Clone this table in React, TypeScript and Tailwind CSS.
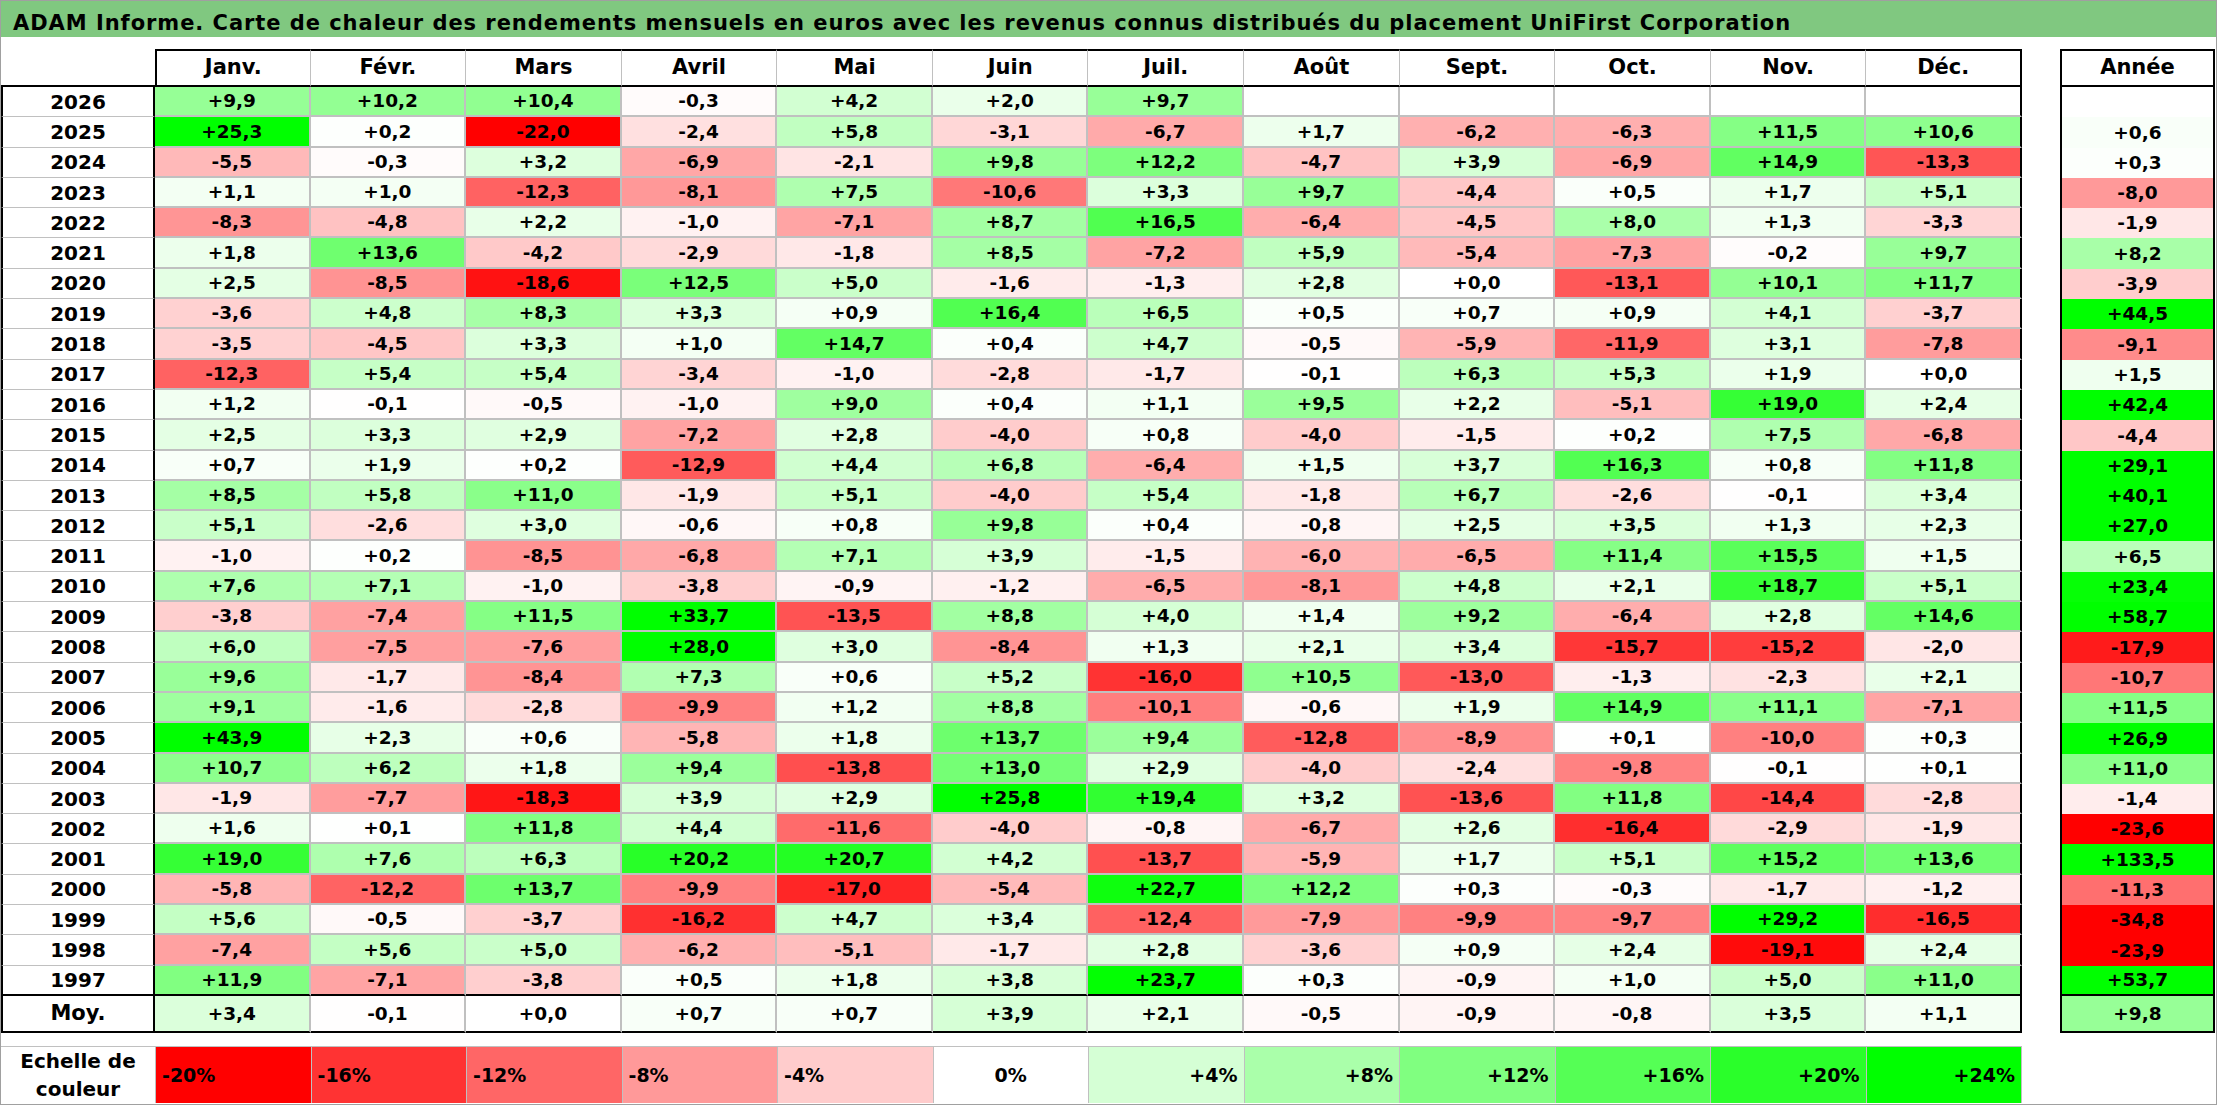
// App.tsx
const months = ["Janv.", "Févr.", "Mars", "Avril", "Mai", "Juin", "Juil.", "Août", "Sept.", "Oct.", "Nov.", "Déc."];

// year, 12 monthly values, annual value
const data: [string, string[], string][] = [
  ["2026", ["+9,9", "+10,2", "+10,4", "-0,3", "+4,2", "+2,0", "+9,7", "", "", "", "", ""], ""],
  ["2025", ["+25,3", "+0,2", "-22,0", "-2,4", "+5,8", "-3,1", "-6,7", "+1,7", "-6,2", "-6,3", "+11,5", "+10,6"], "+0,6"],
  ["2024", ["-5,5", "-0,3", "+3,2", "-6,9", "-2,1", "+9,8", "+12,2", "-4,7", "+3,9", "-6,9", "+14,9", "-13,3"], "+0,3"],
  ["2023", ["+1,1", "+1,0", "-12,3", "-8,1", "+7,5", "-10,6", "+3,3", "+9,7", "-4,4", "+0,5", "+1,7", "+5,1"], "-8,0"],
  ["2022", ["-8,3", "-4,8", "+2,2", "-1,0", "-7,1", "+8,7", "+16,5", "-6,4", "-4,5", "+8,0", "+1,3", "-3,3"], "-1,9"],
  ["2021", ["+1,8", "+13,6", "-4,2", "-2,9", "-1,8", "+8,5", "-7,2", "+5,9", "-5,4", "-7,3", "-0,2", "+9,7"], "+8,2"],
  ["2020", ["+2,5", "-8,5", "-18,6", "+12,5", "+5,0", "-1,6", "-1,3", "+2,8", "+0,0", "-13,1", "+10,1", "+11,7"], "-3,9"],
  ["2019", ["-3,6", "+4,8", "+8,3", "+3,3", "+0,9", "+16,4", "+6,5", "+0,5", "+0,7", "+0,9", "+4,1", "-3,7"], "+44,5"],
  ["2018", ["-3,5", "-4,5", "+3,3", "+1,0", "+14,7", "+0,4", "+4,7", "-0,5", "-5,9", "-11,9", "+3,1", "-7,8"], "-9,1"],
  ["2017", ["-12,3", "+5,4", "+5,4", "-3,4", "-1,0", "-2,8", "-1,7", "-0,1", "+6,3", "+5,3", "+1,9", "+0,0"], "+1,5"],
  ["2016", ["+1,2", "-0,1", "-0,5", "-1,0", "+9,0", "+0,4", "+1,1", "+9,5", "+2,2", "-5,1", "+19,0", "+2,4"], "+42,4"],
  ["2015", ["+2,5", "+3,3", "+2,9", "-7,2", "+2,8", "-4,0", "+0,8", "-4,0", "-1,5", "+0,2", "+7,5", "-6,8"], "-4,4"],
  ["2014", ["+0,7", "+1,9", "+0,2", "-12,9", "+4,4", "+6,8", "-6,4", "+1,5", "+3,7", "+16,3", "+0,8", "+11,8"], "+29,1"],
  ["2013", ["+8,5", "+5,8", "+11,0", "-1,9", "+5,1", "-4,0", "+5,4", "-1,8", "+6,7", "-2,6", "-0,1", "+3,4"], "+40,1"],
  ["2012", ["+5,1", "-2,6", "+3,0", "-0,6", "+0,8", "+9,8", "+0,4", "-0,8", "+2,5", "+3,5", "+1,3", "+2,3"], "+27,0"],
  ["2011", ["-1,0", "+0,2", "-8,5", "-6,8", "+7,1", "+3,9", "-1,5", "-6,0", "-6,5", "+11,4", "+15,5", "+1,5"], "+6,5"],
  ["2010", ["+7,6", "+7,1", "-1,0", "-3,8", "-0,9", "-1,2", "-6,5", "-8,1", "+4,8", "+2,1", "+18,7", "+5,1"], "+23,4"],
  ["2009", ["-3,8", "-7,4", "+11,5", "+33,7", "-13,5", "+8,8", "+4,0", "+1,4", "+9,2", "-6,4", "+2,8", "+14,6"], "+58,7"],
  ["2008", ["+6,0", "-7,5", "-7,6", "+28,0", "+3,0", "-8,4", "+1,3", "+2,1", "+3,4", "-15,7", "-15,2", "-2,0"], "-17,9"],
  ["2007", ["+9,6", "-1,7", "-8,4", "+7,3", "+0,6", "+5,2", "-16,0", "+10,5", "-13,0", "-1,3", "-2,3", "+2,1"], "-10,7"],
  ["2006", ["+9,1", "-1,6", "-2,8", "-9,9", "+1,2", "+8,8", "-10,1", "-0,6", "+1,9", "+14,9", "+11,1", "-7,1"], "+11,5"],
  ["2005", ["+43,9", "+2,3", "+0,6", "-5,8", "+1,8", "+13,7", "+9,4", "-12,8", "-8,9", "+0,1", "-10,0", "+0,3"], "+26,9"],
  ["2004", ["+10,7", "+6,2", "+1,8", "+9,4", "-13,8", "+13,0", "+2,9", "-4,0", "-2,4", "-9,8", "-0,1", "+0,1"], "+11,0"],
  ["2003", ["-1,9", "-7,7", "-18,3", "+3,9", "+2,9", "+25,8", "+19,4", "+3,2", "-13,6", "+11,8", "-14,4", "-2,8"], "-1,4"],
  ["2002", ["+1,6", "+0,1", "+11,8", "+4,4", "-11,6", "-4,0", "-0,8", "-6,7", "+2,6", "-16,4", "-2,9", "-1,9"], "-23,6"],
  ["2001", ["+19,0", "+7,6", "+6,3", "+20,2", "+20,7", "+4,2", "-13,7", "-5,9", "+1,7", "+5,1", "+15,2", "+13,6"], "+133,5"],
  ["2000", ["-5,8", "-12,2", "+13,7", "-9,9", "-17,0", "-5,4", "+22,7", "+12,2", "+0,3", "-0,3", "-1,7", "-1,2"], "-11,3"],
  ["1999", ["+5,6", "-0,5", "-3,7", "-16,2", "+4,7", "+3,4", "-12,4", "-7,9", "-9,9", "-9,7", "+29,2", "-16,5"], "-34,8"],
  ["1998", ["-7,4", "+5,6", "+5,0", "-6,2", "-5,1", "-1,7", "+2,8", "-3,6", "+0,9", "+2,4", "-19,1", "+2,4"], "-23,9"],
  ["1997", ["+11,9", "-7,1", "-3,8", "+0,5", "+1,8", "+3,8", "+23,7", "+0,3", "-0,9", "+1,0", "+5,0", "+11,0"], "+53,7"],
];

const avg = ["+3,4", "-0,1", "+0,0", "+0,7", "+0,7", "+3,9", "+2,1", "-0,5", "-0,9", "-0,8", "+3,5", "+1,1"];
const avgYear = "+9,8";

const scale = [-20, -16, -12, -8, -4, 0, 4, 8, 12, 16, 20, 24];

// white -> red below zero (full at -20), white -> green above (full at +24)
function heat(v: number) {
  if (v >= 0) {
    const c = Math.round(255 * (1 - Math.min(v / 24, 1)));
    return `rgb(${c},255,${c})`;
  }
  const c = Math.round(255 * (1 - Math.min(-v / 20, 1)));
  return `rgb(255,${c},${c})`;
}

function bg(s: string) {
  if (!s) return "#ffffff";
  return heat(parseFloat(s.replace(",", ".")));
}

export default function App() {
  const last = data.length - 1;
  return (
    <div className="w-[2217px] h-[1105px] border border-[#a0a0a0] bg-white text-black font-['DejaVu_Sans',sans-serif] font-bold flex flex-col overflow-hidden">
      {/* titre */}
      <div className="h-[36px] bg-[#80c880] flex items-center pl-[12px] pt-[8px] text-[21px] tracking-[0.95px] leading-none whitespace-nowrap">
        ADAM Informe. Carte de chaleur des rendements mensuels en euros avec les revenus connus distribués du placement UniFirst Corporation
      </div>

      <div className="flex mt-[12px]">
        {/* tableau mensuel */}
        <div className="w-[2021px] h-[984px] grid grid-cols-[154px_repeat(12,minmax(0,1fr))] grid-rows-[38px_repeat(30,minmax(0,1fr))_37px]">
          <div className="border-b-2 border-black" />
          {months.map((m, i) => (
            <div
              key={m}
              className={`flex items-center justify-center text-[21px] border-t-2 border-b-2 border-black ${
                i === 0 ? "border-l-2" : ""
              } ${i === 11 ? "border-r-2" : "border-r border-r-[#c0c0c0]"}`}
            >
              {m}
            </div>
          ))}

          {data.map(([year, vals], r) => (
            <>
              <div
                key={year}
                className={`flex items-center justify-center text-[20px] border-l-2 border-r-2 border-black ${
                  r === last ? "border-b-2" : "border-b border-b-[#c0c0c0]"
                }`}
              >
                {year}
              </div>
              {vals.map((v, i) => (
                <div
                  key={year + i}
                  style={{ backgroundColor: bg(v) }}
                  className={`flex items-center justify-center text-[18.5px] ${
                    i === 11 ? "border-r-2 border-r-black" : "border-r-2 border-r-[#c0c0c0]"
                  } ${r === last ? "border-b-2 border-b-black" : "border-b-2 border-b-[#c0c0c0]"}`}
                >
                  {v}
                </div>
              ))}
            </>
          ))}

          <div className="flex items-center justify-center text-[21px] border-l-2 border-r-2 border-b-2 border-black">
            Moy.
          </div>
          {avg.map((v, i) => (
            <div
              key={"moy" + i}
              style={{ backgroundColor: bg(v) }}
              className={`flex items-center justify-center text-[18.5px] border-b-2 border-b-black ${
                i === 11 ? "border-r-2 border-r-black" : "border-r-2 border-r-[#c0c0c0]"
              }`}
            >
              {v}
            </div>
          ))}
        </div>

        {/* colonne année */}
        <div className="ml-[38px] w-[155px] h-[984px] grid grid-rows-[38px_repeat(30,minmax(0,1fr))_37px]">
          <div className="flex items-center justify-center text-[21px] border-2 border-black">Année</div>
          {data.map(([year, , y], r) => (
            <div
              key={"y" + year}
              style={{ backgroundColor: bg(y) }}
              className={`flex items-center justify-center text-[18.5px] border-l-2 border-r-2 border-black ${
                r === last ? "border-b-2" : ""
              }`}
            >
              {y}
            </div>
          ))}
          <div
            style={{ backgroundColor: bg(avgYear) }}
            className="flex items-center justify-center text-[18.5px] border-l-2 border-r-2 border-b-2 border-black"
          >
            {avgYear}
          </div>
        </div>
      </div>

      {/* échelle de couleur */}
      <div className="flex mt-[13px] h-[57px] w-[2021px]">
        <div className="w-[154px] flex flex-col items-center justify-center text-[20px] leading-[28px] text-center border-t border-[#c0c0c0]">
          <span>Echelle de</span>
          <span>couleur</span>
        </div>
        {scale.map((s) => (
          <div
            key={s}
            style={{ backgroundColor: heat(s) }}
            className={`flex-1 flex items-center px-[6px] text-[19px] border-t border-r border-[#c0c0c0] ${
              s < 0 ? "justify-start" : s === 0 ? "justify-center" : "justify-end"
            } ${s === -20 ? "border-l" : ""}`}
          >
            {s > 0 ? `+${s}%` : `${s}%`}
          </div>
        ))}
      </div>
    </div>
  );
}
